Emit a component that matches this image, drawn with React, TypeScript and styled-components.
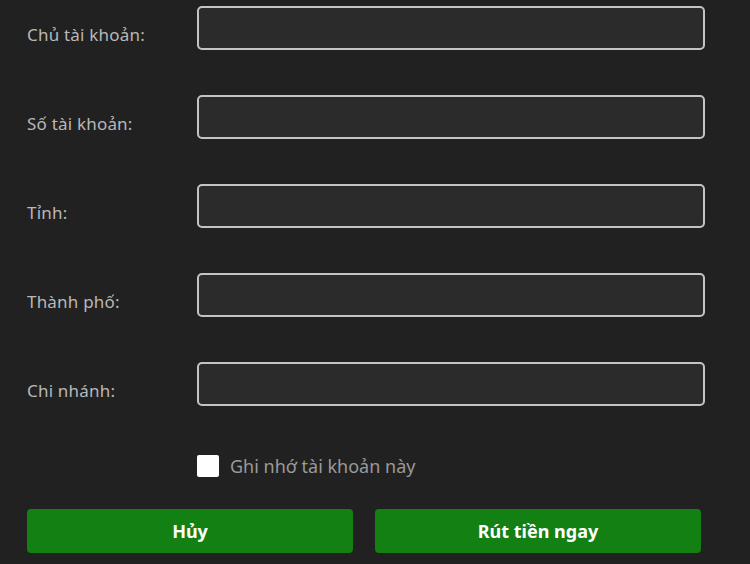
import React from 'react';
import styled, { createGlobalStyle } from 'styled-components';

const GlobalStyle = createGlobalStyle`
  html, body {
    margin: 0;
    padding: 0;
    background-color: #212121;
  }
  body {
    font-family: 'Noto Sans', 'Open Sans', sans-serif;
  }
`;

const Form = styled.div`
  width: 750px;
  height: 564px;
  box-sizing: border-box;
  padding: 6px 0 0 27px;
  display: flex;
  flex-direction: column;
  overflow: hidden;
`;

const Fields = styled.div`
  display: flex;
  flex-direction: column;
  gap: 45px;
`;

const Row = styled.div`
  display: flex;
  align-items: center;
`;

const Label = styled.label`
  width: 170px;
  padding-top: 12px;
  font-size: 17px;
  letter-spacing: 0.2px;
  color: #b8b8b8;
`;

const Input = styled.input`
  width: 508px;
  height: 44px;
  box-sizing: border-box;
  background-color: #2b2b2b;
  border: 2px solid #c4c4c4;
  border-radius: 5px;
  color: #eee;
  font-size: 16px;
  padding: 0 10px;
  outline: none;
`;

const Remember = styled.label`
  display: flex;
  align-items: center;
  gap: 11px;
  height: 24px;
  margin: 48px 0 0 170px;
  font-size: 18px;
  color: #9a9a9a;
`;

const Box = styled.span`
  width: 22px;
  height: 22px;
  background-color: #ffffff;
  border-radius: 2px;
`;

const Actions = styled.div`
  display: flex;
  gap: 22px;
  margin-top: 31px;
`;

const Button = styled.button`
  width: 326px;
  height: 44px;
  border: none;
  border-radius: 4px;
  background-color: #138013;
  color: #ffffff;
  font-family: 'Noto Sans', 'Open Sans', sans-serif;
  font-weight: bold;
  font-size: 18px;
  cursor: pointer;
`;

const fields = ['Chủ tài khoản:', 'Số tài khoản:', 'Tỉnh:', 'Thành phố:', 'Chi nhánh:'];

const App: React.FC = () => {
  return (
    <>
      <GlobalStyle />
      <Form>
        <Fields>
          {fields.map((f) => (
            <Row key={f}>
              <Label>{f}</Label>
              <Input type="text" />
            </Row>
          ))}
        </Fields>
        <Remember>
          <Box />
          Ghi nhớ tài khoản này
        </Remember>
        <Actions>
          <Button>Hủy</Button>
          <Button>Rút tiền ngay</Button>
        </Actions>
      </Form>
    </>
  );
};

export default App;
